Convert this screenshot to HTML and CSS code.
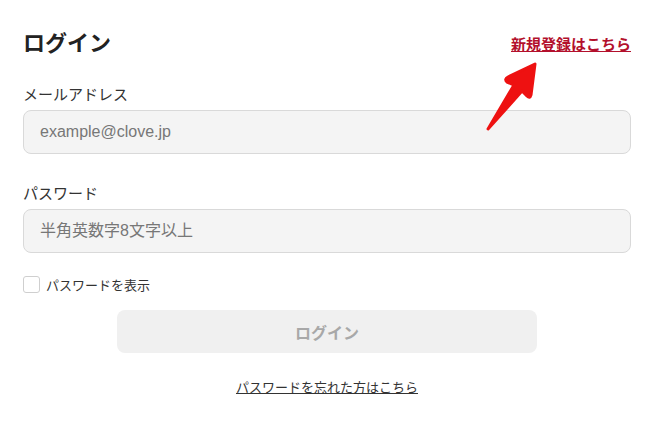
FILE: index.html
```html
<!DOCTYPE html>
<html lang="ja">
<head>
<meta charset="utf-8">
<title>ログイン</title>
<link rel="stylesheet" href="styles.css">
</head>
<body>
<main class="login">
  <div class="head">
    <h1 class="title">ログイン</h1>
    <a class="signup" href="#">新規登録はこちら</a>
    <svg class="arrow" width="60" height="80" viewBox="0 0 60 80">
      <path d="M52 6 L48 37 Q47 41 44 38 L39 33 L5 71 L31 27 L24 24 Q21 21 25 19 Z" fill="#ee1111" stroke="#ee1111" stroke-width="3" stroke-linejoin="round"/>
    </svg>
  </div>
  <label class="label" for="email">メールアドレス</label>
  <input class="field" id="email" type="text" placeholder="example@clove.jp">
  <label class="label label-pw" for="pw">パスワード</label>
  <input class="field" id="pw" type="password" placeholder="半角英数字8文字以上">
  <div class="show">
    <span class="box"></span>
    <span class="show-text">パスワードを表示</span>
  </div>
  <button class="submit" type="button">ログイン</button>
  <div class="forgot-row"><a class="forgot" href="#">パスワードを忘れた方はこちら</a></div>
</main>
</body>
</html>
```
FILE: styles.css
```css
html, body {
  margin: 0;
  padding: 0;
  background: #fff;
}
body {
  font-family: "Liberation Sans", "Noto Sans CJK JP", sans-serif;
  color: #333;
}
.login {
  width: 608px;
  margin-left: 23px;
  padding-top: 30px;
  display: flex;
  flex-direction: column;
}
.head {
  position: relative;
  display: flex;
  justify-content: space-between;
  align-items: center;
  height: 28px;
}
.title {
  margin: 0;
  font-size: 22px;
  font-weight: bold;
  color: #222;
  line-height: 28px;
}
.signup {
  font-size: 15px;
  font-weight: bold;
  color: #b3102c;
  text-decoration: underline;
  margin-top: -2px;
}
.arrow {
  position: absolute;
  left: 460px;
  top: 28px;
}
.label {
  font-size: 15px;
  line-height: 20px;
  color: #333;
  margin-top: 27px;
  margin-bottom: 5px;
}
.label-pw {
  margin-top: 30px;
}
.field {
  box-sizing: border-box;
  width: 608px;
  height: 44px;
  margin: 0;
  border: 1px solid #d9d9d9;
  border-radius: 8px;
  background: #f4f4f4;
  padding: 0 16px;
  font-family: "Liberation Sans", "Noto Sans CJK JP", sans-serif;
  font-size: 16px;
  color: #333;
  outline: none;
}
.field::placeholder {
  color: #777;
}
.show {
  display: flex;
  align-items: center;
  gap: 6px;
  margin-top: 22px;
  height: 18px;
}
.box {
  box-sizing: border-box;
  width: 17px;
  height: 17px;
  border: 1px solid #cfcfcf;
  border-radius: 3px;
  background: #fff;
}
.show-text {
  font-size: 13px;
  color: #333;
}
.submit {
  align-self: center;
  width: 420px;
  height: 43px;
  margin-top: 17px;
  border: none;
  border-radius: 8px;
  background: #f0f0f0;
  color: #a8a8a8;
  font-family: "Liberation Sans", "Noto Sans CJK JP", sans-serif;
  font-size: 16px;
  font-weight: bold;
}
.forgot-row {
  display: flex;
  justify-content: center;
  margin-top: 24px;
}
.forgot {
  font-size: 13px;
  color: #333;
  text-decoration: underline;
}
```
